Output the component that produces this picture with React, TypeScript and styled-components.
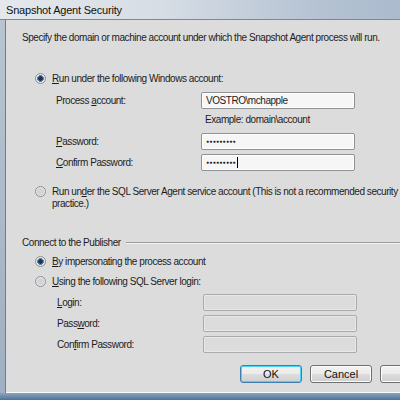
import styled, { createGlobalStyle } from 'styled-components';

const GlobalStyle = createGlobalStyle`
  html, body {
    margin: 0;
    padding: 0;
    overflow: hidden;
    background: #dcdcdc;
  }
`;

const Window = styled.div`
  width: 460px;
  height: 400px;
  display: flex;
  flex-direction: column;
  font-family: 'Liberation Sans', Arial, sans-serif;
  font-size: 10px;
  letter-spacing: -0.45px;
  color: #1c1c1c;
`;

const TitleBar = styled.div`
  height: 20px;
  box-sizing: border-box;
  padding: 4px 0 0 6px;
  font-size: 11px;
  letter-spacing: -0.2px;
  color: #111;
  background: linear-gradient(90deg, #e4e8ec 0%, #d6dde5 35%, #b4c2d2 70%, #a4b6ca 100%);
  border-bottom: 1px solid #7c8896;
`;

const Body = styled.div`
  flex: 1;
  display: flex;
  flex-direction: column;
`;

const Middle = styled.div`
  flex: 1;
  display: flex;
`;

const LeftFrame = styled.div`
  width: 5px;
  background: linear-gradient(180deg, #b9c4d0, #9fb0c3);
  border-right: 1px solid #6f7c8a;
`;

const Client = styled.div`
  flex: 1;
  display: flex;
  flex-direction: column;
  padding: 12px 0 0 16px;
  background: #dcdcdc;
  border-bottom: 1px solid #fafafa;
`;

const BottomFrame = styled.div`
  height: 7px;
  background: linear-gradient(180deg, #8aa4bf, #4f7398);
`;

const Line = styled.div`
  line-height: 12px;
  white-space: nowrap;
`;

const RadioRow = styled.div<{ $top: number }>`
  display: flex;
  align-items: flex-start;
  gap: 6px;
  margin: ${p => p.$top}px 0 0 13px;
  line-height: 12px;
  white-space: nowrap;
`;

const RadioDot = styled.span<{ $checked?: boolean }>`
  width: 11px;
  height: 11px;
  flex: none;
  border-radius: 50%;
  box-sizing: border-box;
  border: 1px solid #8c8f94;
  background: ${p =>
    p.$checked
      ? 'radial-gradient(circle, #1d3550 0 2px, #5d86ad 2.5px 3.2px, #e6eaee 3.6px)'
      : 'radial-gradient(circle, #d2d4d6 0 3px, #eceeef 4.5px)'};
`;

const FieldGrid = styled.div<{ $top: number; $indent: number; $col: number }>`
  display: grid;
  grid-template-columns: ${p => p.$col}px 154px;
  row-gap: 4px;
  align-items: center;
  margin: ${p => p.$top}px 0 0 ${p => p.$indent}px;
`;

const Label = styled.span`
  line-height: 12px;
`;

const TextBox = styled.div<{ $disabled?: boolean }>`
  height: 17px;
  box-sizing: border-box;
  border: 1px solid ${p => (p.$disabled ? '#a9abae' : '#8e9296')};
  border-radius: 2px;
  background: ${p => (p.$disabled ? '#dcdcdc' : '#f6f6f6')};
  padding: 0 4px;
  line-height: 15px;
  display: flex;
  align-items: center;
  box-shadow: inset 0 0 0 1px ${p => (p.$disabled ? '#e8e8e8' : '#fff')};
`;

const Dots = styled.span`
  font-size: 5px;
  letter-spacing: 0.3px;
  color: #222;
`;

const Caret = styled.span`
  width: 1px;
  height: 11px;
  background: #000;
  margin-left: 1px;
`;

const Hint = styled.span`
  grid-column: 2;
  padding-left: 4px;
  line-height: 12px;
  margin: 1px 0 3px;
`;

const GroupHeader = styled.div`
  display: flex;
  align-items: center;
  gap: 5px;
  margin-top: 27px;
  line-height: 12px;
  &::after {
    content: '';
    flex: 1;
    border-top: 1px solid #9b9b9b;
    border-bottom: 1px solid #f4f4f4;
  }
`;

const ButtonRow = styled.div`
  display: flex;
  gap: 8px;
  margin: 12px 0 0 218px;
`;

const Button = styled.div<{ $default?: boolean }>`
  width: 62px;
  height: 18px;
  flex: none;
  box-sizing: border-box;
  border-radius: 3px;
  border: 1px solid ${p => (p.$default ? '#3c7fb1' : '#707070')};
  background: linear-gradient(180deg, #f2f2f2 0%, #ebebeb 48%, #dddddd 52%, #cfcfcf 100%);
  box-shadow: ${p => (p.$default ? 'inset 0 0 0 1px #48d4f6' : 'inset 0 0 0 1px #fcfcfc')};
  display: flex;
  align-items: center;
  justify-content: center;
  font-size: 11px;
  letter-spacing: 0;
  color: #111;
`;

function PasswordBox({ caret }: { caret?: boolean }) {
  return (
    <TextBox>
      <Dots>●●●●●●●●●</Dots>
      {caret && <Caret />}
    </TextBox>
  );
}

export default function App() {
  return (
    <Window>
      <GlobalStyle />
      <TitleBar>Snapshot Agent Security</TitleBar>
      <Body>
        <Middle>
          <LeftFrame />
          <Client>
            <Line>Specify the domain or machine account under which the Snapshot Agent process will run.</Line>

            <RadioRow $top={29}>
              <RadioDot $checked />
              <span><u>R</u>un under the following Windows account:</span>
            </RadioRow>

            <FieldGrid $top={7} $indent={34} $col={145}>
              <Label>Process <u>a</u>ccount:</Label>
              <TextBox>VOSTRO\mchapple</TextBox>
              <Hint>Example: domain\account</Hint>
              <Label><u>P</u>assword:</Label>
              <PasswordBox />
              <Label><u>C</u>onfirm Password:</Label>
              <PasswordBox caret />
            </FieldGrid>

            <RadioRow $top={15}>
              <RadioDot />
              <span>
                Run un<u>d</u>er the SQL Server Agent service account (This is not a recommended security
                <br />
                practice.)
              </span>
            </RadioRow>

            <GroupHeader>Connect to the Publisher</GroupHeader>

            <RadioRow $top={7}>
              <RadioDot $checked />
              <span><u>B</u>y impersonating the process account</span>
            </RadioRow>
            <RadioRow $top={8}>
              <RadioDot />
              <span><u>U</u>sing the following SQL Server login:</span>
            </RadioRow>

            <FieldGrid $top={6} $indent={35} $col={146}>
              <Label><u>L</u>ogin:</Label>
              <TextBox $disabled />
              <Label>Pass<u>w</u>ord:</Label>
              <TextBox $disabled />
              <Label>Con<u>f</u>irm Password:</Label>
              <TextBox $disabled />
            </FieldGrid>

            <ButtonRow>
              <Button $default>OK</Button>
              <Button>Cancel</Button>
              <Button />
            </ButtonRow>
          </Client>
        </Middle>
        <BottomFrame />
      </Body>
    </Window>
  );
}
